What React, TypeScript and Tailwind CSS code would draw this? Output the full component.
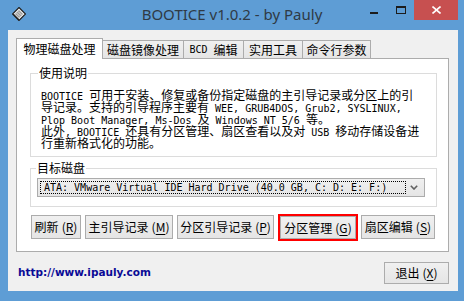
import React from 'react';

const cjk = "font-['Noto_Sans_CJK_SC',sans-serif]";

// SimSun-like half-width latin run
const M: React.FC<{ children: React.ReactNode }> = ({ children }) => (
  <span className="font-['DejaVu_Sans_Mono',monospace] text-[10px] leading-[12px] whitespace-pre">{children}</span>
);

const Key: React.FC<{ k: string }> = ({ k }) => (
  <span className="ml-[3px]">
    (<span className="underline underline-offset-2">{k}</span>)
  </span>
);

const WinButton: React.FC<{ w: string; children: React.ReactNode }> = ({ w, children }) => (
  <div
    className={`${w} h-[24px] shrink-0 border border-[#acacac] bg-gradient-to-b from-[#f0f0f0] to-[#e5e5e5] flex items-center justify-center text-[12px] text-black ${cjk}`}
  >
    {children}
  </div>
);

const tabs = [
  { label: '磁盘镜像处理', w: 'w-[82px]' },
  { label: 'BCD 编辑', w: 'w-[61px]', mono: true },
  { label: '实用工具', w: 'w-[60px]' },
  { label: '命令行参数', w: 'w-[69px]' },
];

const AppIcon = () => (
  <svg width="14" height="14" viewBox="0 0 14 14">
    <polygon points="7,0.5 13.5,7 7,13.5 0.5,7" fill="#f4f4f4" stroke="#1e1e1e" strokeWidth="1.2" />
    <polygon points="7,3 11,7 7,11 3,7" fill="#9a9a9a" />
    <line x1="4.5" y1="6" x2="8" y2="9.5" stroke="#f4f4f4" strokeWidth="0.8" />
    <line x1="6" y1="4.5" x2="9.5" y2="8" stroke="#f4f4f4" strokeWidth="0.8" />
    <polygon points="0.5,7 7,13.5 7,12 2,7" fill="#1e1e1e" />
  </svg>
);

// 使用说明的每一行
const Line: React.FC<{ children: React.ReactNode }> = ({ children }) => (
  <div className="h-[12px] leading-[12px] whitespace-nowrap">{children}</div>
);

const App: React.FC = () => {
  return (
    <div className="w-[464px] h-[301px] bg-[#5e9dd5] flex flex-col overflow-hidden">
      {/* 标题栏 */}
      <div className="h-[30px] shrink-0 grid grid-cols-[1fr_auto_1fr]">
        <div className="pl-[12px] pt-[7px]">
          <AppIcon />
        </div>
        <div className="font-['Noto_Sans',sans-serif] text-[15px] leading-[28px] text-[#2f3a45]">
          BOOTICE v1.0.2 - by Pauly
        </div>
        <div className="flex justify-end items-start pr-[6px]">
          <div className="w-[26px] h-[20px] flex justify-center">
            <div className="mt-[12px] w-[8px] h-[2px] bg-[#1c1c1c]" />
          </div>
          <div className="w-[27px] h-[20px] flex justify-center">
            <div className="mt-[6px] w-[10px] h-[8px] border border-[#1c1c1c] border-t-2" />
          </div>
          <div className="w-[44px] h-[20px] bg-[#c75050] flex items-center justify-center">
            <svg width="9" height="8" viewBox="0 0 9 8">
              <line x1="0.5" y1="0.5" x2="8.5" y2="7.5" stroke="#fff" strokeWidth="1.6" />
              <line x1="8.5" y1="0.5" x2="0.5" y2="7.5" stroke="#fff" strokeWidth="1.6" />
            </svg>
          </div>
        </div>
      </div>

      {/* 客户区 */}
      <div className="ml-[8px] w-[450px] h-[261px] bg-[#f0f0f0] flex flex-col">
        <div className="pt-[8px] pl-[8px] pr-[9px]">
          {/* 选项卡 */}
          <div className={`flex items-end h-[20px] text-[12px] text-black ${cjk}`}>
            <div className="relative z-10 -mb-px w-[87px] h-[21px] bg-white border border-[#acacac] border-b-0 flex items-center justify-center">
              物理磁盘处理
            </div>
            {tabs.map((t) => (
              <div
                key={t.label}
                className={`${t.w} h-[18px] -ml-px first:ml-0 border border-[#acacac] border-b-0 bg-gradient-to-b from-[#f0f0f0] to-[#e5e5e5] flex items-center justify-center`}
              >
                {t.mono ? (
                  <>
                    <M>BCD </M>编辑
                  </>
                ) : (
                  t.label
                )}
              </div>
            ))}
          </div>

          {/* 选项卡面板 */}
          <div className="h-[194px] bg-white border border-[#acacac] pl-[13px] pr-[11px] pt-[7px]">
            <fieldset className="h-[91px] border border-[#dcdcdc] pl-[10px] pt-[9px]">
              <legend className={`-ml-[3px] px-[1px] text-[12px] leading-[14px] text-black ${cjk}`}>使用说明</legend>
              <div className={`text-[12px] leading-[12px] text-black ${cjk}`}>
                <Line>
                  <M>BOOTICE </M>可用于安装、修复或备份指定磁盘的主引导记录或分区上的引
                </Line>
                <Line>
                  导记录。支持的引导程序主要有<M> WEE, GRUB4DOS, Grub2, SYSLINUX,</M>
                </Line>
                <Line>
                  <M>Plop Boot Manager, Ms-Dos </M>及<M> Windows NT 5/6 </M>等。
                </Line>
                <Line>
                  此外<M>, BOOTICE </M>还具有分区管理、扇区查看以及对<M> USB </M>移动存储设备进
                </Line>
                <Line>行重新格式化的功能。</Line>
              </div>
            </fieldset>

            <fieldset className="mt-[4px] h-[46px] border border-[#dcdcdc] pl-[6px] pr-[11px] pt-[3px]">
              <legend className={`-ml-[1px] px-[1px] text-[12px] leading-[14px] text-black ${cjk}`}>目标磁盘</legend>
              <div className="h-[19px] border border-[#acacac] bg-gradient-to-b from-[#f0f0f0] to-[#e5e5e5] flex items-stretch p-[2px]">
                <div className="flex-1 border border-dotted border-black pl-[3px] flex items-center text-black">
                  <M>ATA: VMware Virtual IDE Hard Drive (40.0 GB, C: D: E: F:)</M>
                </div>
                <div className="w-[16px] flex items-center justify-center">
                  <svg width="8" height="5" viewBox="0 0 8 5">
                    <polyline points="0.8,0.8 4,4 7.2,0.8" fill="none" stroke="#606060" strokeWidth="1.6" />
                  </svg>
                </div>
              </div>
            </fieldset>

            {/* 按钮行 */}
            <div className="mt-[8px] ml-[1px] h-[24px] flex items-start">
              <WinButton w="w-[50px]">
                刷新<Key k="R" />
              </WinButton>
              <div className="ml-[4px]">
                <WinButton w="w-[88px]">
                  主引导记录<Key k="M" />
                </WinButton>
              </div>
              <div className="ml-[4px]">
                <WinButton w="w-[97px]">
                  分区引导记录<Key k="P" />
                </WinButton>
              </div>
              <div className="ml-[4px] -mt-px w-[80px] h-[27px] border-2 border-[#ff0000] shrink-0 flex">
                <div
                  className={`flex-1 border border-[#acacac] bg-gradient-to-b from-[#f0f0f0] to-[#e5e5e5] flex items-center justify-center text-[12px] text-black ${cjk}`}
                >
                  分区管理<Key k="G" />
                </div>
              </div>
              <div className="ml-[3px]">
                <WinButton w="w-[74px]">
                  扇区编辑<Key k="S" />
                </WinButton>
              </div>
            </div>
          </div>
        </div>

        {/* 底部 */}
        <div className="mt-[10px] pl-[10px] pr-[9px] flex items-center justify-between">
          <span className="font-['DejaVu_Sans',sans-serif] font-bold text-[10.5px] text-[#0a0a96]">
            http://www.ipauly.com
          </span>
          <div
            className={`w-[65px] h-[22px] border border-[#acacac] bg-gradient-to-b from-[#f0f0f0] to-[#e5e5e5] flex items-center justify-center text-[12px] text-black ${cjk}`}
          >
            退出<Key k="X" />
          </div>
        </div>
      </div>
    </div>
  );
};

export default App;
